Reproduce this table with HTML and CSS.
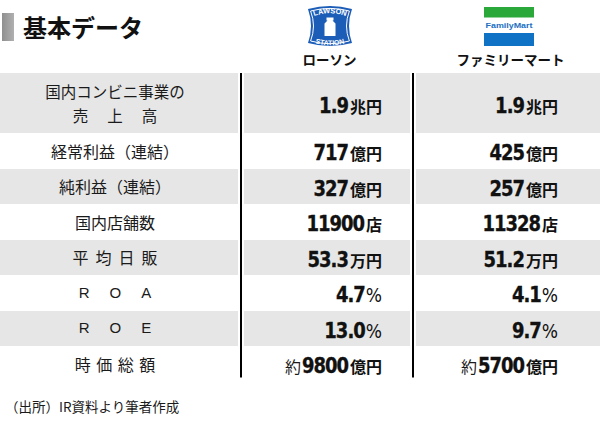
FILE: index.html
```html
<!DOCTYPE html>
<html lang="ja">
<head>
<meta charset="utf-8">
<link rel="stylesheet" href="styles.css">
</head>
<body>
<div class="page">
  <div class="head">
    <div class="title"><span class="bar"></span><h1>基本データ</h1></div>
    <div class="brand">
      <svg class="logo-lawson" viewBox="0 0 46 40" width="46" height="40">
        <defs>
          <path id="arcTop" d="M6,10.5 Q23,4 40,10.5"/>
          <path id="arcBot" d="M6,36.5 Q23,42 40,36.5"/>
        </defs>
        <path d="M1,3 Q23,-3 45,3 Q39,20 45,37 Q23,43 1,37 Q7,20 1,3Z" fill="#1c5db8"/>
        <path d="M3.6,5 Q23,-0.2 42.4,5 Q36.6,20 42.4,35 Q23,40.4 3.6,35 Q9.4,20 3.6,5Z" fill="none" stroke="#fff" stroke-width="1"/>
        <path d="M19.5,11.5 h7 v3 h-1 l3,3 v12.5 h-11 v-12.5 l3,-3 h-1z" fill="#fff"/>
        <text font-family="Liberation Sans, sans-serif" font-weight="700" font-size="7.4" fill="#fff"><textPath href="#arcTop" startOffset="50%" text-anchor="middle">LAWSON</textPath></text>
        <text font-family="Liberation Sans, sans-serif" font-weight="700" font-size="7" fill="#fff"><textPath href="#arcBot" startOffset="50%" text-anchor="middle">STATION</textPath></text>
      </svg>
      <div class="bname">ローソン</div>
    </div>
    <div class="brand">
      <svg class="logo-fm" viewBox="0 0 50 39" width="50" height="39">
        <rect x="0" y="0" width="50" height="10.5" fill="#2aa83a"/>
        <text x="25" y="21" text-anchor="middle" font-family="Liberation Sans, sans-serif" font-weight="700" font-size="7" textLength="47" lengthAdjust="spacingAndGlyphs" fill="#1b6fc2">FamilyMart</text>
        <rect x="0" y="26" width="50" height="13" fill="#0f72c4"/>
      </svg>
      <div class="bname">ファミリーマート</div>
    </div>
  </div>

  <div class="table">
    <div class="lbl g"><div class="two"><span>国内コンビニ事業の</span><span class="sp sp19">売上高</span></div></div>
    <div class="val v1 g"><span class="num">1.9</span><span class="unit">兆円</span></div>
    <div class="val v2 g"><span class="num">1.9</span><span class="unit">兆円</span></div>

    <div class="lbl">経常利益（連結）</div>
    <div class="val v1"><span class="num">717</span><span class="unit">億円</span></div>
    <div class="val v2"><span class="num">425</span><span class="unit">億円</span></div>

    <div class="lbl g">純利益（連結）</div>
    <div class="val v1 g"><span class="num">327</span><span class="unit">億円</span></div>
    <div class="val v2 g"><span class="num">257</span><span class="unit">億円</span></div>

    <div class="lbl">国内店舗数</div>
    <div class="val v1"><span class="num">11900</span><span class="unit">店</span></div>
    <div class="val v2"><span class="num">11328</span><span class="unit">店</span></div>

    <div class="lbl g"><span class="sp sp8">平均日販</span></div>
    <div class="val v1 g"><span class="num">53.3</span><span class="unit">万円</span></div>
    <div class="val v2 g"><span class="num">51.2</span><span class="unit">万円</span></div>

    <div class="lbl"><span class="sp sp20">ROA</span></div>
    <div class="val v1"><span class="num">4.7</span><span class="pct">%</span></div>
    <div class="val v2"><span class="num">4.1</span><span class="pct">%</span></div>

    <div class="lbl g"><span class="sp sp20">ROE</span></div>
    <div class="val v1 g"><span class="num">13.0</span><span class="pct">%</span></div>
    <div class="val v2 g"><span class="num">9.7</span><span class="pct">%</span></div>

    <div class="lbl"><span class="sp sp7">時価総額</span></div>
    <div class="val v1"><span class="pre">約</span><span class="num">9800</span><span class="unit">億円</span></div>
    <div class="val v2"><span class="pre">約</span><span class="num">5700</span><span class="unit">億円</span></div>
  </div>

  <p class="source">（出所）IR資料より筆者作成</p>
</div>
</body>
</html>
```

FILE: styles.css
```css
html, body {
  margin: 0;
  padding: 0;
  background: #fff;
}
body {
  font-family: "Noto Sans CJK JP", "Noto Sans", sans-serif;
  color: #1a1a1a;
  width: 600px;
}
.page {
  width: 600px;
}
.head {
  display: grid;
  grid-template-columns: 238px 166px 184px;
  column-gap: 6px;
  height: 73px;
}
.title {
  display: flex;
  align-items: center;
  gap: 9px;
  padding-left: 2px;
  padding-top: 13px;
  align-self: start;
}
.bar {
  display: block;
  width: 12px;
  height: 28px;
  background: linear-gradient(90deg, #8f8f8f, #b0b0b0);
}
.title h1 {
  margin: 0;
  font-size: 24px;
  font-weight: 700;
  line-height: 28px;
  color: #111;
}
.brand {
  display: flex;
  flex-direction: column;
  align-items: center;
  padding-top: 6px;
}
.brand svg {
  display: block;
}
.logo-lawson {
  margin-left: 5px;
}
.logo-fm {
  margin-top: 1px;
  margin-left: 2px;
}
.bname {
  margin-top: 5px;
  font-size: 13.5px;
  font-weight: 700;
  line-height: 16px;
  color: #111;
  margin-left: 5px;
}
.table {
  display: grid;
  grid-template-columns: 238px 166px 184px;
  grid-template-rows: 60px repeat(7, 35.5px);
  column-gap: 6px;
  background:
    linear-gradient(#000, #000) 240px 0 / 2px calc(100% - 4.5px) no-repeat,
    linear-gradient(#000, #000) 412px 0 / 2px calc(100% - 4.5px) no-repeat;
}
.g {
  background: #e6e6e6;
}
.lbl {
  display: flex;
  align-items: center;
  justify-content: center;
  padding-right: 8px;
  font-size: 16px;
  line-height: 20px;
  color: #1a1a1a;
}
.two {
  display: flex;
  flex-direction: column;
  align-items: center;
  line-height: 24px;
  font-size: 15.5px;
}
.sp {
  display: inline-block;
}
.sp19 { letter-spacing: 19px; margin-right: -19px; }
.sp8 { letter-spacing: 7px; margin-right: -7px; }
.sp7 { letter-spacing: 5.5px; margin-right: -5.5px; }
.sp20 { letter-spacing: 20px; margin-right: -20px; font-family: "Liberation Sans", sans-serif; font-size: 15px; }
.val {
  display: flex;
  align-items: baseline;
  justify-content: flex-end;
  padding-top: 5px;
  box-sizing: border-box;
  align-content: center;
  flex-wrap: wrap;
}
.v1 { padding-right: 28px; }
.v2 { padding-right: 42px; }
.num {
  display: inline-block;
  font-family: "DejaVu Sans Condensed", "DejaVu Sans", sans-serif;
  font-stretch: condensed;
  font-weight: 700;
  font-size: 20px;
  letter-spacing: -1px;
  color: #111;
  line-height: 22px;
  transform: scaleY(1.1);
  transform-origin: 50% 18px;
  -webkit-text-stroke: 0.3px #111;
}
.unit {
  font-family: "Noto Sans CJK JP", sans-serif;
  font-weight: 700;
  font-size: 16px;
  margin-left: 2px;
  color: #111;
  line-height: 22px;
}
.pct {
  font-family: "DejaVu Sans Condensed", "DejaVu Sans", sans-serif;
  font-stretch: condensed;
  font-weight: 400;
  font-size: 19px;
  margin-left: 1px;
  color: #111;
  line-height: 22px;
}
.pre {
  font-family: "Noto Sans CJK JP", sans-serif;
  font-weight: 400;
  font-size: 16px;
  margin-right: 1px;
  line-height: 22px;
}
.source {
  margin: 15px 0 0 5px;
  font-size: 13.5px;
  line-height: 18px;
  color: #1a1a1a;
}
```
